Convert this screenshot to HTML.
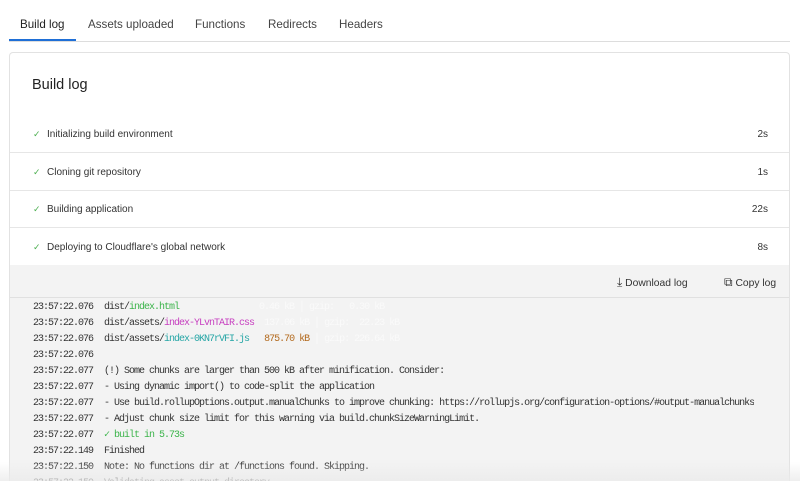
<!DOCTYPE html>
<html style="height:481px;overflow:hidden"><head><style>
body{margin:0;width:800px;height:481px;overflow:hidden;background:#fff;font-family:"Liberation Sans",sans-serif;color:#333;position:relative}
.tabs{position:absolute;left:9px;top:0;width:781px;height:41px;border-bottom:1px solid #ddd}
.tab{position:absolute;top:18px;font-size:11.6px;color:#444}
.ul{position:absolute;left:9px;top:39px;width:67px;height:2px;background:#1f6fd6}
.card{position:absolute;left:9px;top:52px;width:779px;height:428px;border:1px solid #e2e2e2;border-bottom:0;border-radius:4px 4px 0 0;background:#fff;overflow:hidden}
h1{position:absolute;left:22px;top:24px;margin:0;font-size:14.5px;font-weight:normal;color:#222}
.row{position:absolute;left:0;width:779px;height:37px;border-bottom:1px solid #e6e6e6;font-size:10px;color:#333}
.row .c{position:absolute;left:23px;top:14px;color:#4caf50;font-size:9px}
.row .t{position:absolute;left:37px;top:14px}
.row .d{position:absolute;right:21px;top:14px}
.gray{position:absolute;left:0;top:212px;width:779px;height:216px;background:#f3f3f3;overflow:hidden}
.tool{position:absolute;left:0;top:0;width:779px;height:32px;border-bottom:1px solid #e0e0e0;font-size:10.3px;color:#333}
.log{position:absolute;left:23px;top:35px;height:181px;overflow:hidden;font-family:"Liberation Mono",monospace;font-size:10px;letter-spacing:-1px;color:#333;white-space:pre;line-height:16px}
.log span.ts{display:inline-block;width:71px}
.g{color:#3cb44b}.m{color:#c740c0}.cy{color:#26a6a6}.o{color:#b36a1e}.w{color:#fafafa}
.shade{position:absolute;left:0;top:462px;width:800px;height:19px;background:linear-gradient(rgba(255,255,255,0),rgba(235,235,235,0.8))}
</style></head><body>
<div class="tabs"></div>
<div class="tab" style="left:20px;color:#222">Build log</div>
<div class="tab" style="left:88px">Assets uploaded</div>
<div class="tab" style="left:195px">Functions</div>
<div class="tab" style="left:268px">Redirects</div>
<div class="tab" style="left:339px">Headers</div>
<div class="ul"></div>
<div class="card">
<h1>Build log</h1>
<div class="row" style="top:62px"><span class="c">✓</span><span class="t">Initializing build environment</span><span class="d">2s</span></div>
<div class="row" style="top:100px"><span class="c">✓</span><span class="t">Cloning git repository</span><span class="d">1s</span></div>
<div class="row" style="top:137px"><span class="c">✓</span><span class="t">Building application</span><span class="d">22s</span></div>
<div class="row" style="top:175px"><span class="c">✓</span><span class="t">Deploying to Cloudflare's global network</span><span class="d">8s</span></div>
<div class="gray">
<div class="tool"><span style="position:absolute;left:607px;top:10px"><span style="font-size:12px">⤓</span> Download log</span><span style="position:absolute;left:714px;top:10px"><span style="font-size:12px">⧉</span> Copy log</span></div>
<div class="log"><span class="ts">23:57:22.076</span>dist/<span class="g">index.html</span>                <span class="w">0.46 kB │ gzip:   0.30 kB</span>
<span class="ts">23:57:22.076</span>dist/assets/<span class="m">index-YLvnTAIR.css</span>  <span class="w">137.06 kB │ gzip:  22.23 kB</span>
<span class="ts">23:57:22.076</span>dist/assets/<span class="cy">index-0KN7rVFI.js</span>   <span class="o">875.70 kB</span><span class="w"> │ gzip: 226.64 kB</span>
<span class="ts">23:57:22.076</span>
<span class="ts">23:57:22.077</span>(!) Some chunks are larger than 500 kB after minification. Consider:
<span class="ts">23:57:22.077</span>- Using dynamic import() to code-split the application
<span class="ts">23:57:22.077</span>- Use build.rollupOptions.output.manualChunks to improve chunking: https://rollupjs.org/configuration-options/#output-manualchunks
<span class="ts">23:57:22.077</span>- Adjust chunk size limit for this warning via build.chunkSizeWarningLimit.
<span class="ts">23:57:22.077</span><span class="g">✓ built in 5.73s</span>
<span class="ts">23:57:22.149</span>Finished
<span class="ts">23:57:22.150</span>Note: No functions dir at /functions found. Skipping.
<span class="ts">23:57:22.150</span>Validating asset output directory</div>
</div>
</div>
<div class="shade"></div>
</body></html>
